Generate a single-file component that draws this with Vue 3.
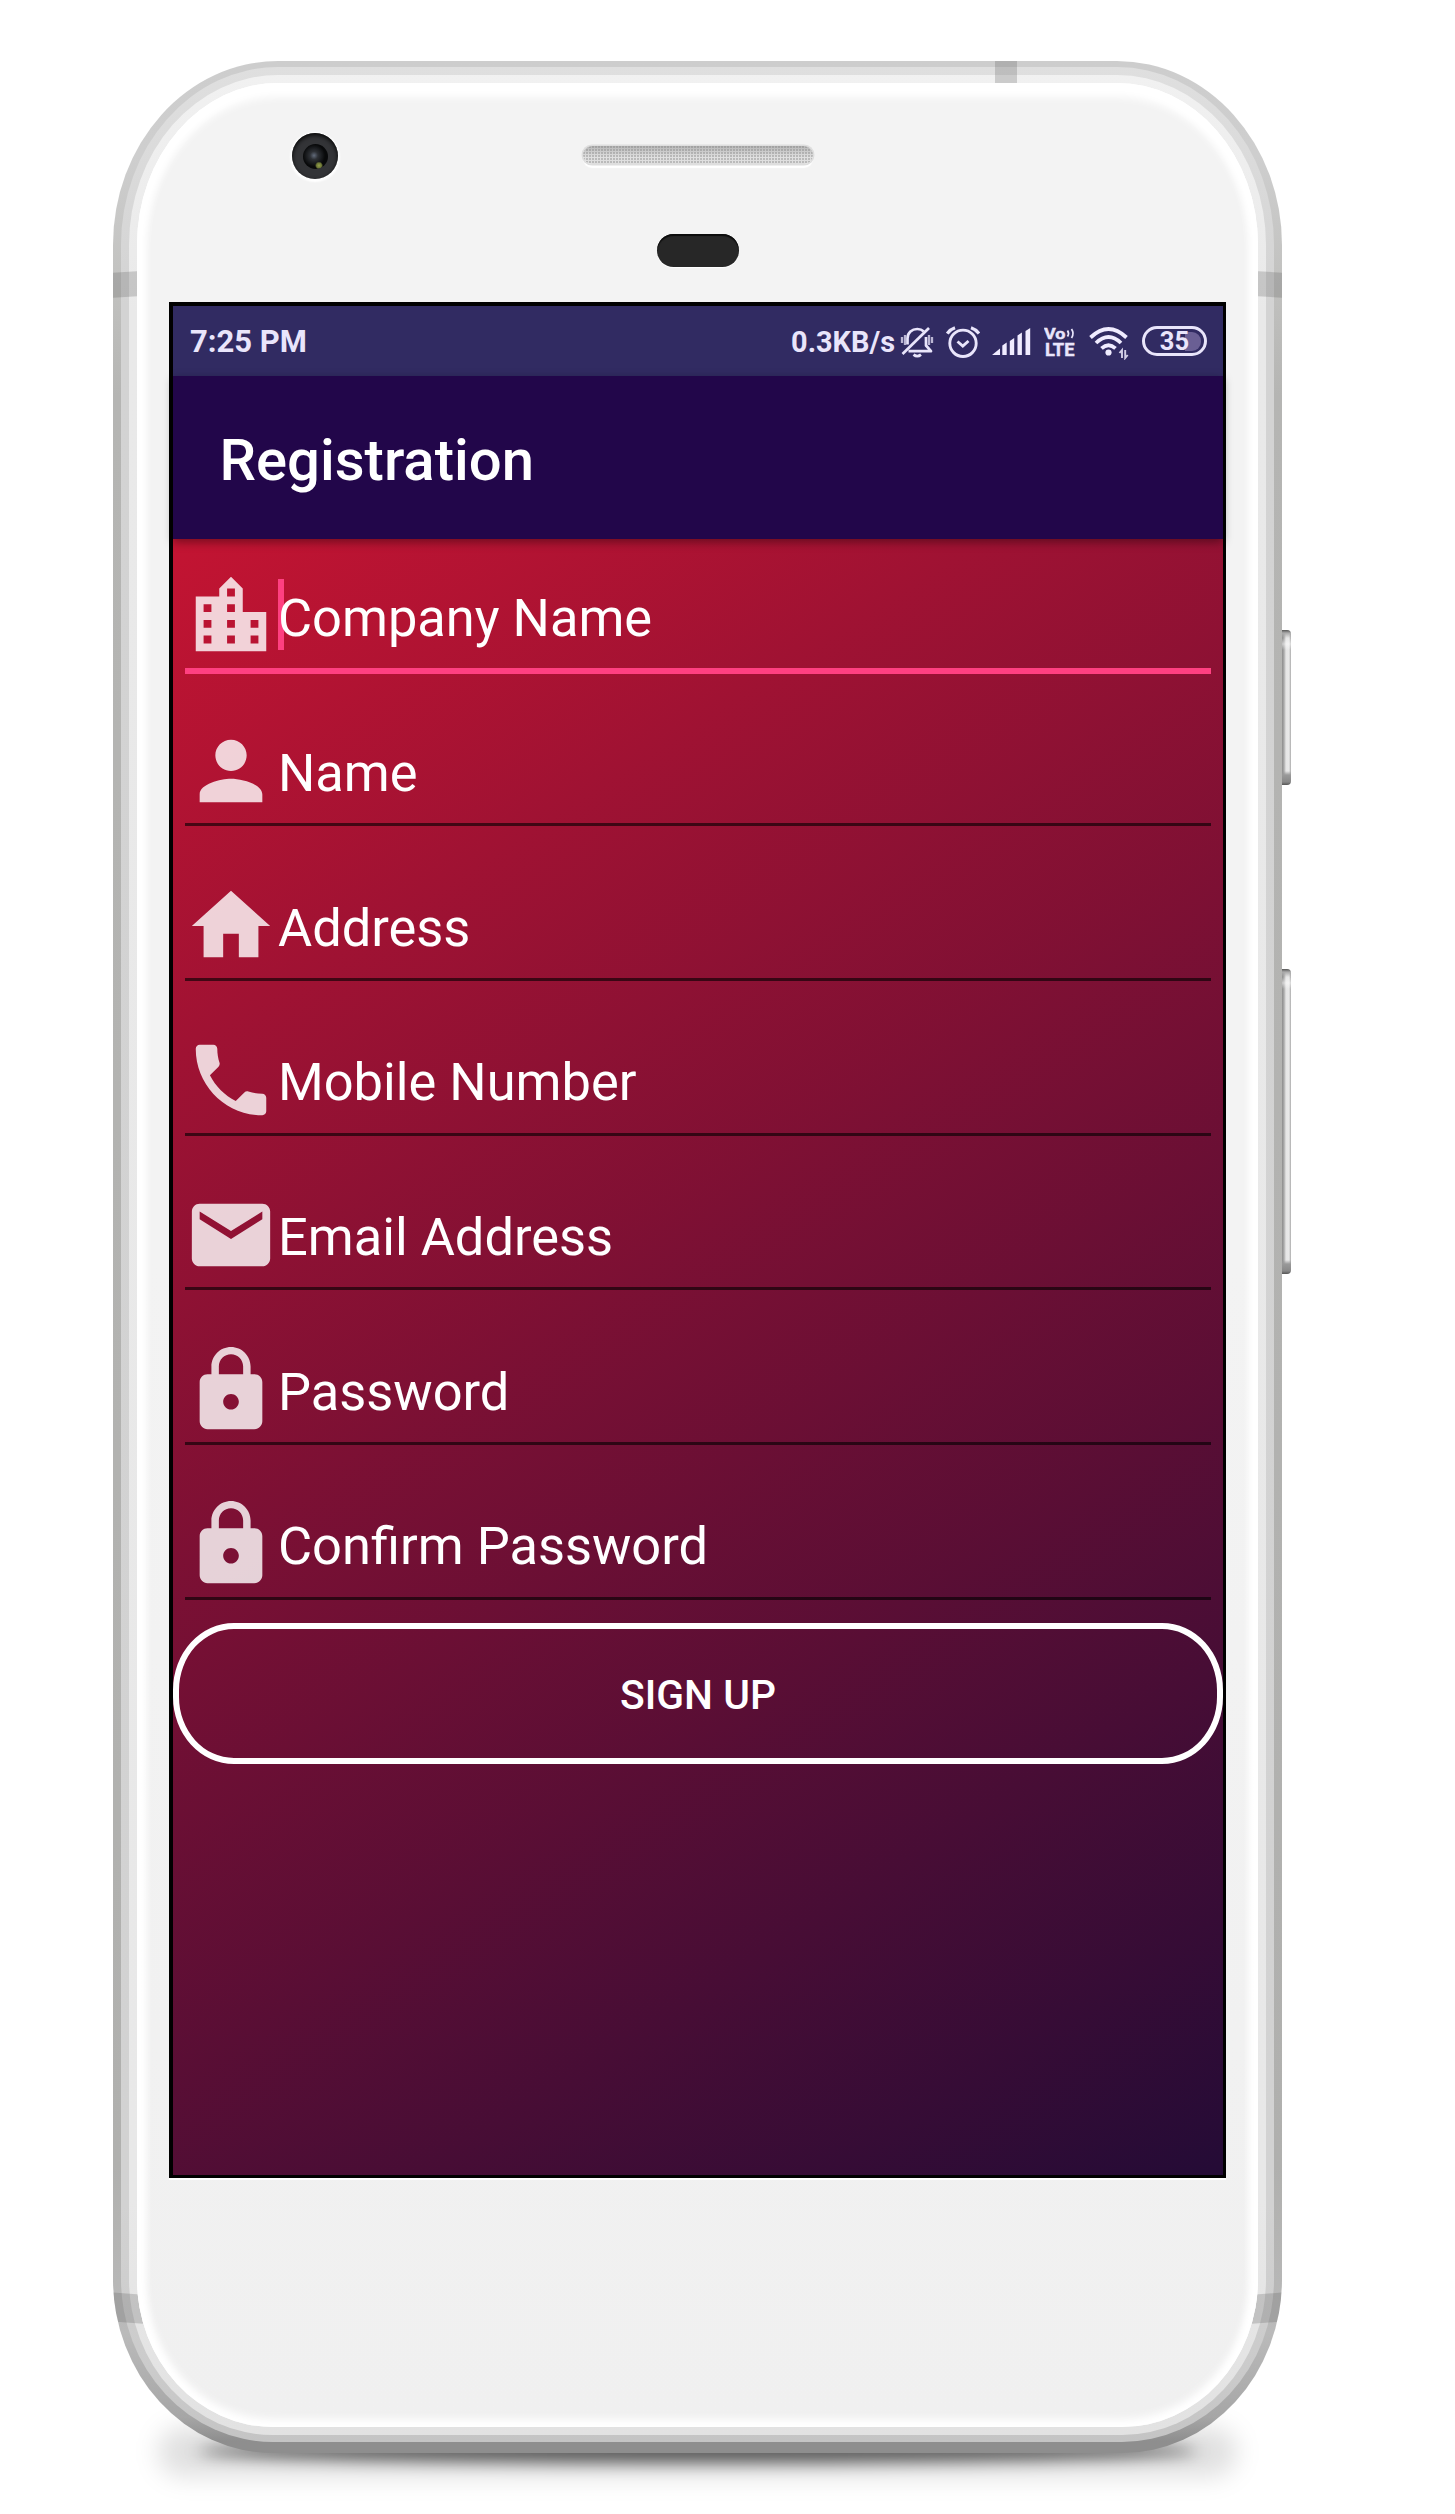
<script setup>
const lock = 'M18 8h-1V6c0-2.76-2.24-5-5-5S7 3.24 7 6v2H6c-1.1 0-2 .9-2 2v10c0 1.1.9 2 2 2h12c1.1 0 2-.9 2-2V10c0-1.1-.9-2-2-2zm-6 9c-1.1 0-2-.9-2-2s.9-2 2-2 2 .9 2 2-.9 2-2 2zm3.1-9H8.9V6c0-1.71 1.39-3.1 3.1-3.1 1.71 0 3.1 1.39 3.1 3.1v2z'

const fields = [
  { label: 'Company Name', icon: 'M15 11V5l-3-3-3 3v2H3v14h18V11h-6zm-8 8H5v-2h2v2zm0-4H5v-2h2v2zm0-4H5V9h2v2zm6 8h-2v-2h2v2zm0-4h-2v-2h2v2zm0-4h-2V9h2v2zm0-4h-2V5h2v2zm6 12h-2v-2h2v2zm0-4h-2v-2h2v2z', focused: true },
  { label: 'Name', icon: 'M12 12c2.21 0 4-1.79 4-4s-1.79-4-4-4-4 1.79-4 4 1.79 4 4 4zm0 2c-2.67 0-8 1.34-8 4v2h16v-2c0-2.66-5.33-4-8-4z' },
  { label: 'Address', icon: 'M10 20v-6h4v6h5v-8h3L12 3 2 12h3v8z' },
  { label: 'Mobile Number', icon: 'M6.62 10.79c1.44 2.83 3.76 5.14 6.59 6.59l2.2-2.2c.27-.27.67-.36 1.02-.24 1.12.37 2.33.57 3.57.57.55 0 1 .45 1 1V20c0 .55-.45 1-1 1-9.39 0-17-7.61-17-17 0-.55.45-1 1-1h3.5c.55 0 1 .45 1 1 0 1.25.2 2.45.57 3.57.11.35.03.74-.25 1.02l-2.2 2.2z' },
  { label: 'Email Address', icon: 'M20 4H4c-1.1 0-1.99.9-1.99 2L2 18c0 1.1.9 2 2 2h16c1.1 0 2-.9 2-2V6c0-1.1-.9-2-2-2zm0 4l-8 5-8-5V6l8 5 8-5v2z' },
  { label: 'Password', icon: lock },
  { label: 'Confirm Password', icon: lock },
]
</script>

<template>
  <div class="page">
    <div class="phone">
      <div class="ground-shadow wide"></div>
      <div class="ground-shadow"></div>
      <div class="side-key power"></div>
      <div class="side-key volume"></div>
      <div class="rim outer">
        <div class="rim middle">
          <div class="rim inner">
            <div class="face">
              <div class="forehead">
                <div class="camera"><i class="lens"></i></div>
                <div class="speaker"></div>
                <div class="sensor"></div>
              </div>

              <main class="screen">
                <div class="status-bar">
                  <span class="clock">7:25 PM</span>
                  <div class="indicators">
                    <span class="speed">0.3KB/s</span>
                    <svg class="bell" width="34" height="32" viewBox="0 0 34 32" fill="none" stroke="#e9e5fb" stroke-width="2.7">
                      <path d="M7.500 18.500V12.500C7.500 6.500 12 3 17.300 3c3 0 5 1 6.500 2.500M26 11v8.500l5 5.700H8.500" stroke-linejoin="round" />
                      <path d="M29 2L2.500 28" />
                      <path d="M13.500 28.600c2.500 2 5 2 7.500 0" />
                      <path d="M2 11v6M5 9v10M29 9v10M32 11v6" stroke-width="2.300" opacity=".75" />
                    </svg>
                    <svg class="alarm" width="34" height="32" viewBox="0 0 34 32" fill="none" stroke="#e9e5fb" stroke-width="2.9">
                      <circle cx="17" cy="17.300" r="13.200" />
                      <path d="M11.500 15.500l5.300 4.500 5.700-5" />
                      <path d="M1.200 7.500Q4 3.500 9 1.800M33 7.500Q30 3.500 25 1.800" stroke-width="3.200" />
                    </svg>
                    <svg class="signal" width="40" height="30" viewBox="0 0 40 30" fill="#f0ecff">
                      <path d="M0 28L8 21.500V28zM10.300 18.500l4.400-3V28h-4.400zM17.800 14l4.400-3V28h-4.400zM25.500 8.500l4.400-3V28h-4.400zM33.500 4l4.700-3V28h-4.700z" />
                    </svg>
                    <svg class="volte" width="32" height="32" viewBox="0 0 32 32" fill="#e9e5fb" stroke="#e9e5fb">
                      <text x="0" y="12.500" font-size="15" textLength="21.500" lengthAdjust="spacingAndGlyphs" stroke-width=".4">Vo</text>
                      <text x="1" y="29.500" font-size="17.500" textLength="29.500" lengthAdjust="spacingAndGlyphs" stroke-width=".4">LTE</text>
                      <path d="M23.500 4.500q2 3 0 6M27.500 3q3 4.500 0 9" fill="none" stroke-width="1.800" />
                    </svg>
                    <svg class="wifi" width="42" height="34" viewBox="0 0 42 34" fill="none" stroke="#f0ecff" stroke-width="3.800">
                      <path d="M1.500 11.500Q19.500-5.500 37.500 11.500" />
                      <path d="M7 17Q19.500 5 32 17" />
                      <path d="M12.500 22.300Q19.500 16 26.500 22.300" />
                      <circle cx="19.500" cy="26.500" r="3.100" fill="#f0ecff" stroke="none" />
                      <path d="M33 32v-8l-2.500 3M36.200 24v8l2.500-3" stroke-width="1.900" opacity=".85" />
                    </svg>
                    <div class="battery"><span>35</span><i></i></div>
                  </div>
                </div>

                <header class="app-bar"><h1>Registration</h1></header>

                <form class="form" @submit.prevent>
                  <label v-for="field in fields" :key="field.label" class="field" :class="{ focused: field.focused }">
                    <svg class="field-icon" viewBox="0 0 24 24"><path :d="field.icon" /></svg>
                    <span class="hint">{{ field.label }}</span>
                  </label>
                  <button class="sign-up" type="submit"><span>SIGN UP</span></button>
                </form>
              </main>
            </div>
          </div>
        </div>
      </div>
      <div class="antennas">
        <i class="cut top"></i>
        <i class="cut upper left"></i>
        <i class="cut upper right"></i>
        <i class="cut lower left"></i>
        <i class="cut lower right"></i>
      </div>
    </div>
  </div>
</template>

<style>
body {
  margin: 0;
  background: #fff;
}
</style>

<style scoped>
.page {
  box-sizing: border-box;
  width: 1455px;
  height: 2514px;
  padding: 61px 0 0 113px;
  overflow: hidden;
  background: #fff;
  font-family: Roboto, sans-serif;
}
.phone {
  position: relative;
  isolation: isolate;
  width: 1169px;
  height: 2392px;
}
.rim {
  box-sizing: border-box;
  width: 100%;
  height: 100%;
}
.outer {
  padding: 6px 8px 11px;
  border-radius: 165px 165px 160px 160px / 184px 184px 174px 174px;
  background: linear-gradient(#cdcdcd 0, #cecece 4%, #c2c2c0 9%, #b5b5b3 14%, #b0b0ae 88%, #bababa 95%, #a6a6a6 98.500%, #8e8e8e 99.500%);
}
.middle {
  padding: 8px 8px 7px;
  border-radius: 157px 157px 152px 152px / 178px 178px 163px 163px;
  background: linear-gradient(#dfdfdf 0, #d3d3d3 10%, #d2d2d2 90%, #cbcbcb 97%, #c4c4c4 100%);
}
.inner {
  padding: 8px;
  border-radius: 149px 149px 144px 144px / 170px 170px 156px 156px;
  background: linear-gradient(#f1f1f1 0, #e9e9e9 10%, #e8e8e8 90%, #e2e2e2 100%);
}
.face {
  position: relative;
  z-index: 2;
  height: 100%;
  box-sizing: border-box;
  padding: 0 32px;
  border-radius: 141px 141px 136px 136px / 162px 162px 148px 148px;
  background: linear-gradient(#f3f3f3, #f3f3f3 50%, #f0f0f0);
  box-shadow: inset 0 0 8px 8px #fff, inset 0 7px 8px 7px #fff;
}
.ground-shadow {
  position: absolute;
  z-index: -1;
  left: 85px;
  right: 85px;
  bottom: -10px;
  height: 24px;
  border-radius: 50%;
  background: rgba(0, 0, 0, .6);
  filter: blur(8px);
}
.ground-shadow.wide {
  left: 45px;
  right: 45px;
  bottom: -24px;
  height: 50px;
  border-radius: 25px;
  background: rgba(0, 0, 0, .12);
  filter: blur(12px);
}
.side-key {
  position: absolute;
  left: 1169px;
  width: 9px;
  border-radius: 0 4px 4px 0;
  background:
    linear-gradient(#555 0, #aaa 3px, transparent 8px, rgba(255, 255, 255, .5) 14px, transparent 20px, transparent calc(100% - 14px), #999 calc(100% - 10px), #888 calc(100% - 3px), #555 100%),
    linear-gradient(90deg, #8c8c8c 0, #aaa 2px, #e6e6e6 4px, #e9e9e9 7px, #aaa 9px);
}
.power {
  top: 569px;
  height: 155px;
}
.volume {
  top: 908px;
  height: 305px;
}
.antennas {
  position: absolute;
  z-index: 1;
  inset: 0;
  overflow: hidden;
  border-radius: 165px 165px 160px 160px / 184px 184px 174px 174px;
}
.cut {
  position: absolute;
  width: 24px;
  background: rgba(90, 90, 90, .25);
}
.top {
  left: 882px;
  top: 0;
  width: 22px;
  height: 22px;
}
.upper {
  top: 211px;
  height: 25px;
}
.lower {
  top: 2233px;
  width: 40px;
  height: 29px;
}
.left {
  left: 0;
  transform: skewY(-3deg);
}
.lower.left {
  transform: skewY(4deg);
}
.right {
  right: 0;
  transform: skewY(3deg);
}
.lower.right {
  transform: skewY(-4deg);
}

.forehead {
  position: relative;
  display: flex;
  box-sizing: border-box;
  height: 219px;
  padding-top: 63px;
  flex-direction: column;
  align-items: center;
  gap: 70px;
}
.speaker {
  width: 230px;
  height: 18px;
  border-radius: 9px;
  background:
    radial-gradient(circle at 1px 1px, rgba(130, 130, 130, .4) .8px, transparent 1px) 0 0 / 3px 3px,
    linear-gradient(#b5b5b5, #e0e0e0 60%, #dedede);
  box-shadow: 0 0 0 1.500px #dedede, 0 4px 1px #fff;
}
.sensor {
  width: 82px;
  height: 33px;
  border-radius: 17px;
  background: #272727;
  box-shadow: inset 0 2px 1px #0c0c0c, 0 1px 1px #fff;
}
.camera {
  position: absolute;
  left: 123px;
  top: 50px;
  display: grid;
  place-items: center;
  width: 46px;
  height: 46px;
  border-radius: 50%;
  background: #333437;
  box-shadow: inset 0 2px 4px #050505, 0 1px 2px 2px #fff;
}
.lens {
  width: 25px;
  height: 25px;
  border-radius: 50%;
  background:
    radial-gradient(circle at 64% 86%, #94a14d 0, #6d7736 2.500px, transparent 4px),
    radial-gradient(circle at 44% 46%, #626b7b 0, #2e3136 4px, #08090a 11px);
}

.screen {
  box-sizing: border-box;
  height: 1876px;
  border: 4px solid #000;
  border-right-width: 3px;
  border-bottom-width: 3px;
  box-shadow: 0 2px 0 #fff;
  background: #22064a;
}
.status-bar {
  display: flex;
  height: 70px;
  box-sizing: border-box;
  padding: 1px 16px 0 17px;
  align-items: center;
  justify-content: space-between;
  background: #312b62;
  color: #e9e5fb;
}
.clock {
  font-size: 31px;
  font-weight: 700;
}
.indicators {
  display: flex;
  align-items: center;
}
.speed {
  font-size: 28.900px;
  font-weight: 700;
}
.bell { margin: 1px 0 0 5px; }
.alarm { margin: 1px 0 0 12px; }
.signal { margin-left: 12px; }
.volte {
  margin-left: 12px;
  font-family: Roboto, sans-serif;
  font-weight: 700;
}
.wifi { margin: 3px 0 0 13px; }
.battery {
  position: relative;
  display: flex;
  box-sizing: border-box;
  width: 65px;
  height: 30px;
  margin: -1px 0 0 11px;
  align-items: center;
  justify-content: center;
  border: 3px solid #e9e5fb;
  border-radius: 15px;
  font-size: 25.500px;
  font-weight: 700;
}
.battery span {
  position: relative;
  z-index: 1;
}
.battery i {
  position: absolute;
  right: 3px;
  top: 2.500px;
  width: 16px;
  height: 19px;
  border-radius: 0 9px 9px 0;
  background: #6a5f94;
}
.app-bar {
  position: relative;
  display: flex;
  height: 163px;
  padding-left: 46.500px;
  align-items: center;
  background: #22064a;
  color: #fff;
  box-shadow: 0 3px 9px rgba(0, 0, 0, .4);
}
h1 {
  margin: 5px 0 0;
  font-size: 58px;
  font-weight: 500;
}
.form {
  box-sizing: border-box;
  height: 1636px;
  padding-top: 1px;
  background: linear-gradient(147.300deg, #c31432, #240b36);
}
.field {
  position: relative;
  display: flex;
  box-sizing: border-box;
  height: 154.670px;
  padding: 29.300px 12px 0 11px;
  align-items: flex-start;
}
.field::after {
  content: '';
  position: absolute;
  left: 11.500px;
  right: 12px;
  top: 128.700px;
  height: 3px;
  background: rgba(0, 0, 0, .6);
}
.field.focused::after {
  top: 128px;
  height: 6px;
  background: #ff4081;
}
.field-icon {
  width: 94px;
  height: 94px;
  fill: rgba(255, 255, 255, .81);
}
.hint {
  position: relative;
  z-index: 0;
  line-height: 98px;
  color: #fff;
  font-size: 52.400px;
}
.focused .hint::before {
  content: '';
  position: absolute;
  z-index: -1;
  left: 0;
  top: 10px;
  width: 6px;
  height: 71px;
  background: #ff4081;
}
.sign-up {
  display: flex;
  box-sizing: border-box;
  width: 100%;
  height: 141px;
  margin: 0;
  padding: 3px 0 0;
  align-items: center;
  justify-content: center;
  border: 6px solid #fff;
  border-radius: 61px / 67px;
  background: transparent;
  color: #fff;
  font: 500 40.800px Roboto, sans-serif;
}
</style>
